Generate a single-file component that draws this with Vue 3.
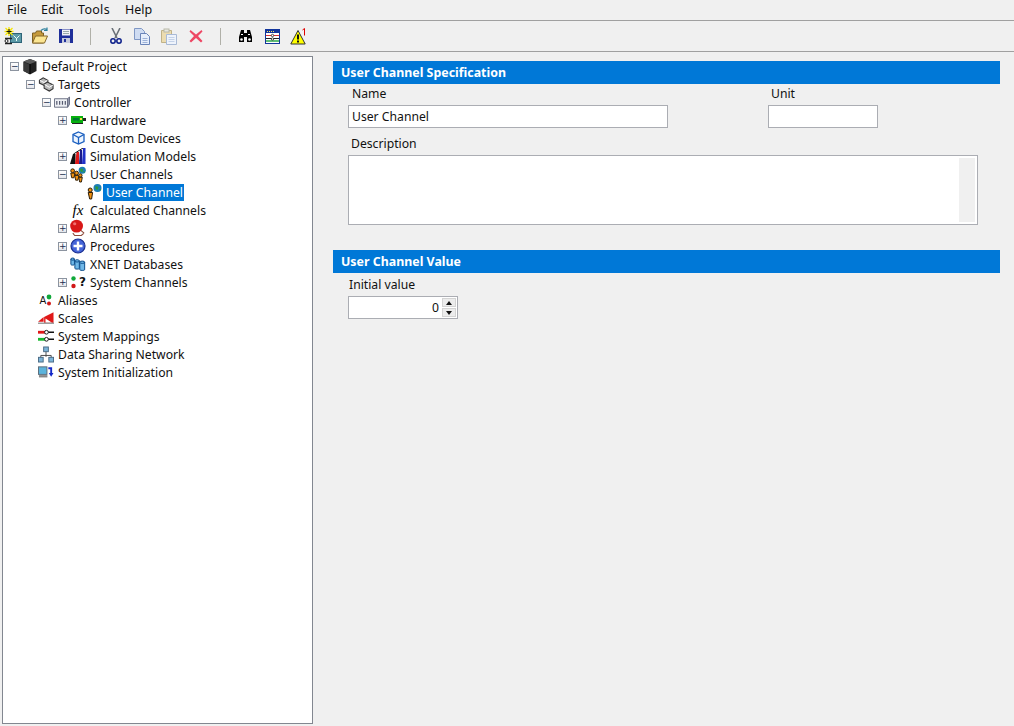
<script setup>
const menus = ['File', 'Edit', 'Tools', 'Help']
const rows = [
  { label: 'Default Project', depth: 0, toggle: '−', icon: 'project' },
  { label: 'Targets', depth: 1, toggle: '−', icon: 'targets' },
  { label: 'Controller', depth: 2, toggle: '−', icon: 'controller' },
  { label: 'Hardware', depth: 3, toggle: '+', icon: 'hardware' },
  { label: 'Custom Devices', depth: 3, icon: 'cube' },
  { label: 'Simulation Models', depth: 3, toggle: '+', icon: 'models' },
  { label: 'User Channels', depth: 3, toggle: '−', icon: 'users' },
  { label: 'User Channel', depth: 4, icon: 'user', selected: true },
  { label: 'Calculated Channels', depth: 3, icon: 'fx' },
  { label: 'Alarms', depth: 3, toggle: '+', icon: 'bell' },
  { label: 'Procedures', depth: 3, toggle: '+', icon: 'plus' },
  { label: 'XNET Databases', depth: 3, icon: 'db' },
  { label: 'System Channels', depth: 3, toggle: '+', icon: 'syschan' },
  { label: 'Aliases', depth: 1, icon: 'alias' },
  { label: 'Scales', depth: 1, icon: 'scales' },
  { label: 'System Mappings', depth: 1, icon: 'mappings' },
  { label: 'Data Sharing Network', depth: 1, icon: 'network' },
  { label: 'System Initialization', depth: 1, icon: 'init' }
]
</script>

<template>
  <div class="app">
    <nav class="menubar">
      <span v-for="m in menus" :key="m" class="menu">{{ m }}</span>
    </nav>
    <div class="toolbar">
      <button class="tool">
        <svg width="18" height="18" viewBox="0 0 18 18">
          <rect x="6.500" y="6.500" width="11" height="9" fill="#5c9aa8" stroke="#2e6478"/>
          <path d="M9.500 8.500l3 3 3-3M12.500 11v3" stroke="#e8fff8" fill="none"/>
          <path d="M5 0v9M.5 4.500h9M1.500 1l7 7M8.500 1l-7 7" stroke="#f6e600" stroke-width="1.300"/>
          <path d="M5 2v5M2.500 4.500h5" stroke="#111"/>
          <path d="M1 11.500h7M1 16.500h7" stroke="#222" stroke-width="1.300"/>
          <circle cx="2.500" cy="14" r="1.500" fill="none" stroke="#222"/>
        </svg>
      </button>
      <button class="tool">
        <svg width="18" height="18" viewBox="0 0 18 18">
          <path d="M1.500 16V6h3l1-2h5v2h2v10z" fill="#c69a3c" stroke="#7c6024"/>
          <path d="M1.500 16l3-7h12l-3 7z" fill="#fbe592" stroke="#86682a"/>
          <path d="M10 3.500c2-2 4-2 6-1M16 .5v3h-3" fill="none" stroke="#2b7f9c" stroke-width="1.200"/>
        </svg>
      </button>
      <button class="tool">
        <svg width="16" height="16" viewBox="0 0 16 16">
          <path d="M1 1h14v14H1z" fill="#1f2f9a"/>
          <rect x="4" y="1.500" width="8" height="6" fill="#f2f2f6"/>
          <path d="M5 3.500h6M5 5.500h6" stroke="#9aa"/>
          <rect x="4" y="10" width="8" height="5" fill="#c6cadc"/>
          <rect x="6" y="11" width="2" height="3" fill="#1f2f9a"/>
        </svg>
      </button>
      <span class="sep"></span>
      <button class="tool">
        <svg width="12" height="17" viewBox="0 0 12 17">
          <path d="M2 0l5 10M10 0L5 10" stroke="#6b7178" stroke-width="1.600" fill="none"/>
          <circle cx="3" cy="13" r="2.200" fill="none" stroke="#0c1f8a" stroke-width="1.500"/>
          <circle cx="9" cy="13" r="2.200" fill="none" stroke="#0c1f8a" stroke-width="1.500"/>
        </svg>
      </button>
      <button class="tool">
        <svg width="17" height="17" viewBox="0 0 17 17">
          <path d="M.5.5h7l3 3v8H.5z" fill="#cfdcf2" stroke="#7f97c4"/>
          <path d="M6.500 5.500h6l3 3v8h-9z" fill="#e6eefb" stroke="#6a84b8"/>
          <path d="M8.500 10.500h5M8.500 12.500h5M8.500 14.500h5" stroke="#9db2d8"/>
        </svg>
      </button>
      <button class="tool">
        <svg width="16" height="17" viewBox="0 0 16 17">
          <path d="M.5 2.500h10v12H.5z" fill="#ecdcb0" stroke="#c0b288"/>
          <rect x="3" y="1" width="5" height="3" fill="#e8e8e0" stroke="#b8b8a8"/>
          <path d="M5.500 6.500h10v10h-10z" fill="#eef3fb" stroke="#a9bad6"/>
          <path d="M7.500 9.500h6M7.500 11.500h6M7.500 13.500h6" stroke="#c4d2e8"/>
        </svg>
      </button>
      <button class="tool">
        <svg width="14" height="14" viewBox="0 0 14 14">
          <path d="M1.500 1L7 5.500 12.500 1 13.500 2.500 9 7l4.500 5-1.500 1.500L7 9 2 13.500.5 12 5 7 .5 2.500z" fill="#ee4764"/>
        </svg>
      </button>
      <span class="sep"></span>
      <button class="tool">
        <svg width="15" height="14" viewBox="0 0 15 14">
          <path d="M3 1h3v3h3V1h3l2 7v5H9V8H6v5H1V8z" fill="#000"/>
          <circle cx="3.500" cy="10.500" r="1.300" fill="#fff"/>
          <circle cx="11.500" cy="10.500" r="1.300" fill="#fff"/>
          <rect x="3" y="5" width="2" height="1" fill="#fff"/>
          <rect x="10" y="5" width="2" height="1" fill="#fff"/>
        </svg>
      </button>
      <button class="tool">
        <svg width="15" height="15" viewBox="0 0 15 15">
          <rect x=".5" y=".5" width="14" height="14" fill="#fff" stroke="#12359c"/>
          <rect x="1" y="1" width="13" height="3" fill="#12359c"/>
          <path d="M2 2.500h1M4 2.500h1M6 2.500h1M8 2.500h1" stroke="#ffe95c"/>
          <path d="M1 6.500h13" stroke="#d33"/>
          <path d="M1 9.500h13" stroke="#222"/>
          <path d="M1 12h13" stroke="#2aa84a" stroke-width="1.500"/>
          <circle cx="7.500" cy="6.500" r="1.200" fill="#fff" stroke="#222" stroke-width=".8"/>
          <circle cx="7.500" cy="10" r="1.200" fill="#fff" stroke="#222" stroke-width=".8"/>
        </svg>
      </button>
      <button class="tool">
        <svg width="17" height="17" viewBox="0 0 17 17">
          <path d="M8 2.500L.8 16h14.400z" fill="#ffff00" stroke="#333"/>
          <path d="M8 6.500v5" stroke="#111" stroke-width="2"/>
          <path d="M8 12.500v2" stroke="#111" stroke-width="2"/>
          <path d="M12.500 2l2-1.500v7" stroke="#e00000" fill="none"/>
        </svg>
      </button>
    </div>

    <div class="workspace">
      <aside class="tree">
        <div v-for="r in rows" :key="r.label" class="row" :class="'depth-' + r.depth">
          <span class="toggle" :class="{ empty: !r.toggle }">{{ r.toggle }}</span>
          <span class="icon">
            <svg v-if="r.icon === 'project'" width="16" height="17" viewBox="0 0 16 17">
              <path d="M8 1l6.500 2.500V13L8 16.500 1.500 13V3.500z" fill="#222"/>
              <path d="M8 1l6.500 2.500L8 6 1.500 3.500z" fill="#5c5c5c"/>
              <path d="M1.500 4l6 2.500V16l-6-3z" fill="#3a3a3a"/>
              <path d="M8 6v10" stroke="#000"/>
            </svg>
            <svg v-else-if="r.icon === 'targets'" width="17" height="16" viewBox="0 0 17 16">
              <g stroke="#333" fill="#b8b8b8" stroke-width="1.100">
                <path d="M1.500 4l4-2.500 5 2.500v3l-4 2.500-5-2.500z"/>
                <path d="M6.500 8l3.500-2 6 3v4l-4 2.500-5.500-3z"/>
              </g>
              <path d="M2 4l4.500 2.500L10 4M7 8.500l5 3 4-2.500" fill="none" stroke="#fff"/>
            </svg>
            <svg v-else-if="r.icon === 'controller'" width="17" height="13" viewBox="0 0 17 13">
              <path d="M.5 2.500h14v9H.500z" fill="#eef0f4" stroke="#666c80"/>
              <path d="M14.500 2.500l2-2v8l-2 3z" fill="#9aa0b4" stroke="#666c80"/>
              <path d="M3 5v4M6 5v4M9 5v4M12 5v4" stroke="#555a70" stroke-width="1.300"/>
            </svg>
            <svg v-else-if="r.icon === 'hardware'" width="15" height="8" viewBox="0 0 15 8">
              <rect width="12" height="7" fill="#08b010"/>
              <rect x="2" y="2" width="6" height="2.500" fill="#073"/>
              <rect x="9" y="2" width="2" height="2" fill="#ffe14a"/>
              <rect x="12" y="2" width="3" height="3" fill="#222"/>
              <path d="M1 7.500h11" stroke="#222"/>
            </svg>
            <svg v-else-if="r.icon === 'cube'" width="13" height="14" viewBox="0 0 13 14">
              <path d="M6.500 1L12 3.500v7L6.500 13 1 10.500v-7z" fill="#eef6ff" stroke="#1a5fc0" stroke-width="1.300"/>
              <path d="M1 3.500l5.500 3 5.500-3M6.500 6.500V13" fill="none" stroke="#1a5fc0" stroke-width="1.300"/>
            </svg>
            <svg v-else-if="r.icon === 'models'" width="16" height="16" viewBox="0 0 16 16">
              <path d="M0 16l3-10h2.500v10z" fill="#111"/>
              <path d="M5 16l1.500-12h2.500v12z" fill="#e01a1a"/>
              <path d="M9 16l1-14h2v14z" fill="#1a1a8c"/>
              <path d="M12 16l1-16h2.500v16z" fill="#2030c8"/>
              <path d="M3.500 6L13 0" stroke="#111"/>
            </svg>
            <svg v-else-if="r.icon === 'users'" width="17" height="17" viewBox="0 0 17 17">
              <circle cx="13" cy="4" r="3.800" fill="#1c7fb6"/>
              <path d="M11 2l3 1-1 3-2-1zM14 5h2l-1 2z" fill="#2e9c3c"/>
              <g fill="#f09010" stroke="#2a1c08">
                <circle cx="2.800" cy="4.500" r="2"/>
                <path d="M.8 7h4.400l-1 5H1.800z"/>
                <circle cx="7" cy="7" r="2"/>
                <path d="M5 9.500h4.400l-1 5H6z"/>
                <circle cx="11" cy="9.500" r="1.800"/>
                <path d="M9.300 11.500h3.800l-1 5h-1.800z"/>
              </g>
            </svg>
            <svg v-else-if="r.icon === 'user'" width="15" height="16" viewBox="0 0 15 16">
              <circle cx="10.500" cy="4" r="4" fill="#1c7fb6"/>
              <path d="M8.500 2l3 1-1 3-2-1zM12 5h2l-1 2z" fill="#2e9c3c"/>
              <g fill="#f09010" stroke="#2a1c08">
                <circle cx="3.200" cy="6" r="2"/>
                <path d="M1.200 8.500h4.400l-1 6.500H2.700z"/>
              </g>
            </svg>
            <span v-else-if="r.icon === 'fx'" class="fx">fx</span>
            <svg v-else-if="r.icon === 'bell'" width="17" height="18" viewBox="0 0 17 18">
              <circle cx="7" cy="7" r="6.800" fill="#d81818"/>
              <circle cx="5" cy="4.500" r="1.700" fill="#f07070"/>
              <path d="M3 14.500l2 2.500h7l3-2.500M11.500 11.500l3.500 3" fill="none" stroke="#8c4a3a" stroke-width="1.200"/>
            </svg>
            <svg v-else-if="r.icon === 'plus'" width="16" height="16" viewBox="0 0 16 16">
              <circle cx="8" cy="8" r="7" fill="#4464d8" stroke="#1a2f90" stroke-width="1.200"/>
              <path d="M8 3.500v9M3.500 8h9" stroke="#fff" stroke-width="2.400"/>
            </svg>
            <svg v-else-if="r.icon === 'db'" width="18" height="16" viewBox="0 0 18 16">
              <g fill="#70b8e8" stroke="#0c4c88" stroke-width="1.100">
                <path d="M1 2.500v6c0 1 4 1 4 0v-6z"/>
                <ellipse cx="3" cy="2.500" rx="2" ry="1.200"/>
                <path d="M5.500 4.500v8.500c0 1 5 1 5 0V4.500z"/>
                <ellipse cx="8" cy="4.500" rx="2.500" ry="1.300"/>
                <path d="M11 6v8.500c0 1 5.500 1 5.500 0V6z"/>
                <ellipse cx="13.750" cy="6" rx="2.750" ry="1.300"/>
              </g>
            </svg>
            <span v-else-if="r.icon === 'syschan'" class="dots">
              <svg width="7" height="13" viewBox="0 0 7 13"><circle cx="3.500" cy="2.500" r="2.200" fill="#10a83a"/><circle cx="3.500" cy="10" r="2.200" fill="#d01818"/></svg><b>?</b>
            </span>
            <span v-else-if="r.icon === 'alias'" class="alias">
              <em>A</em><svg width="6" height="12" viewBox="0 0 6 12"><circle cx="3" cy="3" r="2.400" fill="#10a83a"/><circle cx="3" cy="9.500" r="2" fill="#d01818"/></svg>
            </span>
            <svg v-else-if="r.icon === 'scales'" width="17" height="12" viewBox="0 0 17 12">
              <path d="M0 10l6-5v5z" fill="#e01818"/>
              <path d="M6.500 11V5l10-5v11z" fill="#e01818"/>
              <path d="M8 11V6.500L15 11z" fill="#fff"/>
              <path d="M0 11.500h17" stroke="#666"/>
            </svg>
            <svg v-else-if="r.icon === 'mappings'" width="17" height="14" viewBox="0 0 17 14">
              <path d="M0 3h8" stroke="#e01818" stroke-width="3"/>
              <path d="M10 3h7M10 10.500h7" stroke="#111" stroke-width="1.600"/>
              <path d="M0 10.500h8" stroke="#18b830" stroke-width="3"/>
              <circle cx="9" cy="3" r="2" fill="#fff" stroke="#111"/>
              <circle cx="9" cy="10.500" r="2" fill="#fff" stroke="#111"/>
            </svg>
            <svg v-else-if="r.icon === 'network'" width="17" height="17" viewBox="0 0 17 17">
              <path d="M8.500 5v6M3 12v-2.500h11V12" fill="none" stroke="#444"/>
              <rect x="6" y=".5" width="5" height="5" fill="#7cb4d8" stroke="#4a6a84"/>
              <rect x=".5" y="11.500" width="5" height="5" fill="#7cb4d8" stroke="#4a6a84"/>
              <rect x="11.500" y="11.500" width="5" height="5" fill="#7cb4d8" stroke="#4a6a84"/>
            </svg>
            <svg v-else-if="r.icon === 'init'" width="17" height="13" viewBox="0 0 17 13">
              <rect x=".5" y=".5" width="9" height="8" fill="#5cb4dc" stroke="#5a6a78"/>
              <path d="M1 10.500h9" stroke="#888" stroke-width="2.500"/>
              <path d="M11 2h3v6" fill="none" stroke="#1428c8" stroke-width="2"/>
              <path d="M11.500 7h5L14 11z" fill="#1428c8"/>
            </svg>
          </span>
          <span class="label" :class="{ selected: r.selected }">{{ r.label }}</span>
        </div>
      </aside>

      <main class="detail">
        <h2 class="section">User Channel Specification</h2>
        <div class="name-row">
          <div class="field name-field">
            <label>Name</label>
            <div class="input name-input">User Channel</div>
          </div>
          <div class="field unit-field">
            <label>Unit</label>
            <div class="input unit-input"></div>
          </div>
        </div>
        <div class="field desc-field">
          <label>Description</label>
          <div class="textarea"><span class="scrolltrack"></span></div>
        </div>

        <h2 class="section second">User Channel Value</h2>
        <div class="field value-field">
          <label>Initial value</label>
          <div class="input spin">
            <span class="spin-value">0</span>
            <span class="spin-btns">
              <i class="up"></i>
              <i class="down"></i>
            </span>
          </div>
        </div>
      </main>
    </div>
  </div>
</template>

<style>
html, body { margin: 0; background: #f0f0f0; }
</style>

<style scoped>
.app {
  width: 1014px;
  height: 726px;
  overflow: hidden;
  background: #f0f0f0;
  font-family: "Noto Sans", "Liberation Sans", sans-serif;
  font-size: 12.2px;
  color: #111;
  display: flex;
  flex-direction: column;
}
.menubar {
  height: 20px;
  border-bottom: 1px solid #a0a0a0;
  display: flex;
  align-items: center;
  line-height: 18px;
  font-size: 12.5px;
  padding-left: 7px;
}
.menu:nth-child(1) { width: 34px; }
.menu:nth-child(2) { width: 37px; }
.menu:nth-child(3) { width: 47px; letter-spacing: 0.3px; }
.toolbar {
  height: 30px;
  border-bottom: 1px solid #a0a0a0;
  display: flex;
  align-items: center;
}
.tool {
  width: 26.400px;
  height: 30px;
  padding: 0;
  border: 0;
  background: none;
  display: flex;
  align-items: center;
  justify-content: center;
}
.sep {
  width: 1px;
  height: 17px;
  background: #b0b0a8;
  margin: 0 12px 0 11px;
}
.workspace {
  flex: 1;
  display: flex;
  min-height: 0;
  padding: 4px 14px 2px 2px;
}
.tree {
  width: 309px;
  border: 1px solid #828790;
  background: #fff;
}
.row {
  height: 18px;
  display: flex;
  align-items: center;
  white-space: nowrap;
}
.depth-0 { padding-left: 7px; }
.depth-1 { padding-left: 23px; }
.depth-2 { padding-left: 39px; }
.depth-3 { padding-left: 55px; }
.depth-4 { padding-left: 71px; }
.toggle {
  width: 9px;
  height: 9px;
  box-sizing: border-box;
  border: 1px solid #8c94a0;
  background: linear-gradient(#fff, #e4e6ec);
  color: #1c2c50;
  font: 9px/7px "DejaVu Sans", sans-serif;
  text-align: center;
  overflow: hidden;
}
.toggle.empty { visibility: hidden; }
.icon {
  width: 16px;
  margin-left: 3px;
  height: 18px;
  display: flex;
  align-items: center;
  justify-content: center;
  flex: none;
}
.fx {
  font: italic 15px "Liberation Serif", serif;
  color: #000;
}
.dots, .alias {
  display: flex;
  align-items: center;
}
.dots b {
  font: bold 12px "DejaVu Sans", sans-serif;
  margin-left: 2px;
  color: #111;
}
.alias em {
  font: 10px "DejaVu Sans", sans-serif;
  color: #111;
}
.label {
  margin-left: 3px;
  padding: 0 1px;
  line-height: 17px;
  height: 17px;
}
.label.selected {
  background: #0078d7;
  color: #fff;
  margin-left: 1px;
  padding: 0 1px 0 3px;
}
.detail {
  flex: 1;
  padding: 5px 0 0 20px;
  min-width: 0;
}
.section {
  margin: 0;
  height: 23px;
  line-height: 23px;
  padding-left: 8px;
  background: #0078d7;
  color: #fff;
  font-size: 12.400px;
  font-weight: 700;
}
.section.second { margin-top: 25px; }
.field {
  display: flex;
  flex-direction: column;
}
.field label {
  line-height: 17px;
  height: 17px;
  padding-left: 3px;
}
.name-row {
  display: flex;
  padding: 1px 0 0 15px;
}
.name-field { width: 320px; }
.name-field label { padding-left: 4px; }
.unit-field { width: 110px; margin-left: 100px; }
.input {
  box-sizing: border-box;
  height: 23px;
  margin-top: 3px;
  border: 1px solid #abadb3;
  background: #fff;
  padding-left: 3px;
  line-height: 21px;
}
.desc-field {
  margin: 7px 0 0 15px;
  width: 630px;
}
.textarea {
  box-sizing: border-box;
  height: 70px;
  margin-top: 3px;
  border: 1px solid #abadb3;
  background: #fff;
  padding: 2px;
  display: flex;
  justify-content: flex-end;
}
.scrolltrack {
  width: 16px;
  background: #f0f0f0;
}
.value-field {
  margin: 3px 0 0 15px;
  width: 110px;
}
.value-field label { padding-left: 1px; }
.spin {
  margin-top: 3px;
  display: flex;
  justify-content: flex-end;
  padding: 0 1px 0 0;
}
.spin-value { margin-right: 3px; }
.spin-btns {
  width: 14px;
  display: flex;
  flex-direction: column;
  gap: 1px;
  padding: 1px 0;
}
.spin-btns i {
  flex: 1;
  background: #ececec;
  border: 1px solid #d4d4d4;
  position: relative;
}
.spin-btns i::after {
  content: "";
  position: absolute;
  left: 3px;
  border-left: 3px solid transparent;
  border-right: 3px solid transparent;
}
.spin-btns .up::after { top: 2px; border-bottom: 4px solid #111; }
.spin-btns .down::after { top: 2px; border-top: 4px solid #111; }
</style>
